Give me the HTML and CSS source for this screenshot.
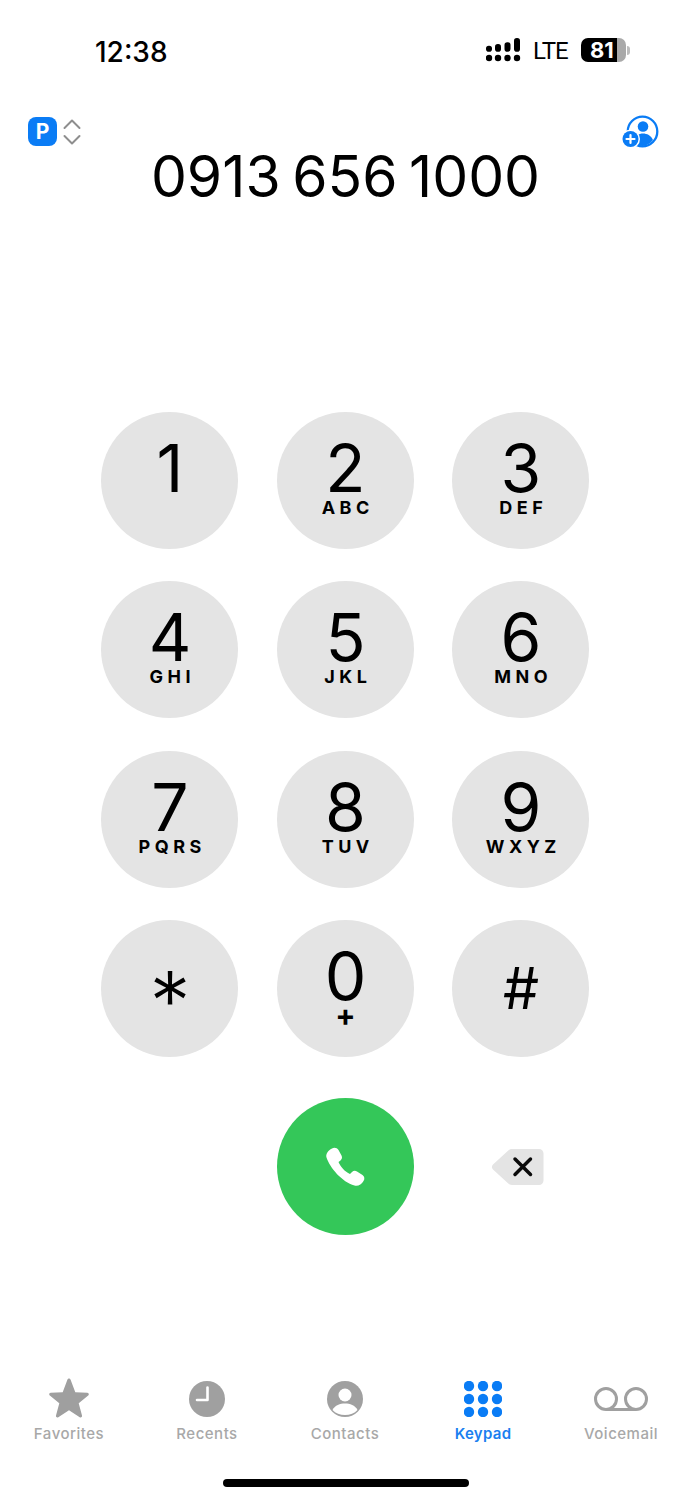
FILE: index.html
```html
<!DOCTYPE html>
<html lang="en">
<head>
<meta charset="utf-8">
<title>Keypad</title>
<link rel="stylesheet" href="styles.css">
</head>
<body>
<main class="phone">
  <header class="status">
    <span class="time">12:38</span>
    <div class="status-right">
      <svg class="signal" viewBox="0 0 35 24" aria-hidden="true">
        <g fill="#000">
          <circle cx="3" cy="20" r="3.200"/><circle cx="12" cy="20" r="3.200"/><circle cx="21.500" cy="20" r="3.200"/><circle cx="31" cy="20" r="3.200"/>
          <rect x="0" y="7.700" width="6" height="6" rx="2.800"/>
          <rect x="9" y="6" width="6" height="7.700" rx="2.800"/>
          <rect x="18.500" y="4.300" width="6" height="9.400" rx="2.800"/>
          <rect x="28" y="0" width="6" height="13.700" rx="2.800"/>
        </g>
      </svg>
      <span class="lte">LTE</span>
      <div class="battery"><span class="battery-level">81</span><span class="battery-nub"></span></div>
    </div>
  </header>

  <section class="topbar">
    <div class="line-picker">
      <span class="line-badge">P</span>
      <svg class="chevrons" viewBox="0 0 18 26" aria-hidden="true">
        <path d="M1.500 9 9 1.500 16.500 9M1.500 17 9 24.500 16.500 17" fill="none" stroke="#8e8e8e" stroke-width="2" stroke-linecap="round" stroke-linejoin="round"/>
      </svg>
    </div>
    <svg class="add-contact" viewBox="0 0 37 33" aria-hidden="true">
      <circle cx="20.500" cy="16.500" r="14.800" fill="none" stroke="#0a7cf5" stroke-width="2.300"/>
      <circle cx="21" cy="11.500" r="5.300" fill="#0a7cf5"/>
      <path d="M11 26c1.500-5.500 6-7.500 10-7.500s8 2 10 6.500c-2.800 3.500-6.500 6-10.500 6-3.500 0-6.500-1.800-9.500-5z" fill="#0a7cf5"/>
      <circle cx="8.500" cy="24" r="9.500" fill="#fff"/>
      <circle cx="8.500" cy="24" r="8" fill="#0a7cf5"/>
      <path d="M8.500 20v8M4.500 24h8" stroke="#fff" stroke-width="2.200" stroke-linecap="round"/>
    </svg>
  </section>

  <h1 class="number">0913 656 1000</h1>

  <section class="keypad">
    <button class="key"><span class="digit">1</span><span class="letters"></span></button>
    <button class="key"><span class="digit">2</span><span class="letters">ABC</span></button>
    <button class="key"><span class="digit">3</span><span class="letters">DEF</span></button>
    <button class="key"><span class="digit">4</span><span class="letters">GHI</span></button>
    <button class="key"><span class="digit">5</span><span class="letters">JKL</span></button>
    <button class="key"><span class="digit">6</span><span class="letters">MNO</span></button>
    <button class="key"><span class="digit">7</span><span class="letters">PQRS</span></button>
    <button class="key"><span class="digit">8</span><span class="letters">TUV</span></button>
    <button class="key"><span class="digit">9</span><span class="letters">WXYZ</span></button>
    <button class="key"><span class="digit star">*</span></button>
    <button class="key"><span class="digit">0</span><span class="letters plus">+</span></button>
    <button class="key"><span class="digit hash">#</span></button>
    <span class="spacer"></span>
    <button class="call" aria-label="Call">
      <svg class="call-icon" viewBox="0 0 40 40" aria-hidden="true">
        <path d="M7 1.500C9 0 12 .5 13.500 3L16.500 8.500C17.500 10.500 17 12 15.500 13.500L13.500 15C15 19 20 25 25 27L27 25C28.500 23.500 30.500 23.500 32 24.500L37.500 28C39.500 29.500 40 32 38.500 34C36.500 37.500 33 39.500 29.500 38.500C17 35 5 21 1.500 10.500C.5 7 3 3.500 7 1.500Z" fill="#fff"/>
      </svg>
    </button>
    <button class="delete" aria-label="Delete">
      <svg class="delete-icon" viewBox="0 0 53 38" aria-hidden="true">
        <path d="M21 1H48A4.500 4.500 0 0 1 52.500 5.500V32.500A4.500 4.500 0 0 1 48 37H21C19.500 37 18 36.300 17 35.300L2 21.500C.5 20 .5 18 2 16.500L17 2.700C18 1.700 19.500 1 21 1Z" fill="#e4e4e4"/>
        <path d="M24 11 39.500 26.500M39.500 11 24 26.500" stroke="#0a0a0a" stroke-width="3.500" stroke-linecap="round"/>
      </svg>
    </button>
  </section>

  <nav class="tabs">
    <a class="tab">
      <svg class="tab-icon star-icon" viewBox="0 0 40 40" aria-hidden="true">
        <path d="M20 .5C20.800.5 21.300 1 21.700 2L26.300 14.200 38.300 14.800C39.800 15 40.300 16.500 39.200 17.500L29.700 25.300 33 37.500C33.400 39 32 40 30.700 39.200L20 32.300 9.300 39.200C8 40 6.600 39 7 37.500L10.300 25.300.8 17.500C-.3 16.500.2 15 1.700 14.800L13.700 14.200 18.300 2C18.700 1 19.200.5 20 .5Z" fill="#9f9f9f"/>
      </svg>
      <span>Favorites</span>
    </a>
    <a class="tab">
      <svg class="tab-icon" viewBox="0 0 36 36" aria-hidden="true">
        <circle cx="18" cy="18" r="18" fill="#a0a0a0"/>
        <path d="M18.500 6.500V19H8" fill="none" stroke="#fff" stroke-width="2.600" stroke-linecap="round" stroke-linejoin="round"/>
      </svg>
      <span>Recents</span>
    </a>
    <a class="tab">
      <svg class="tab-icon" viewBox="0 0 36 36" aria-hidden="true">
        <circle cx="18" cy="18" r="18" fill="#a0a0a0"/>
        <circle cx="18" cy="14" r="6.500" fill="#fff"/>
        <path d="M5.500 29C8 24 13 22.500 18 22.500S28 24 30.500 29C27.500 32.500 23 34 18 34S8.500 32.500 5.500 29Z" fill="#fff"/>
      </svg>
      <span>Contacts</span>
    </a>
    <a class="tab tab-active">
      <svg class="tab-icon keypad-icon" viewBox="0 0 38 36" aria-hidden="true">
        <g fill="#0a7cf5">
          <circle cx="5" cy="5" r="5.200"/><circle cx="19" cy="5" r="5.200"/><circle cx="33" cy="5" r="5.200"/>
          <circle cx="5" cy="18" r="5.200"/><circle cx="19" cy="18" r="5.200"/><circle cx="33" cy="18" r="5.200"/>
          <circle cx="5" cy="31" r="5.200"/><circle cx="19" cy="31" r="5.200"/><circle cx="33" cy="31" r="5.200"/>
        </g>
      </svg>
      <span>Keypad</span>
    </a>
    <a class="tab">
      <svg class="tab-icon voicemail-icon" viewBox="0 0 54 36" aria-hidden="true">
        <g fill="none" stroke="#a0a0a0" stroke-width="3">
          <circle cx="12" cy="18" r="10.500"/><circle cx="42" cy="18" r="10.500"/>
          <path d="M12 28.500H42"/>
        </g>
      </svg>
      <span>Voicemail</span>
    </a>
  </nav>

  <div class="home-bar"></div>
</main>
</body>
</html>
```
FILE: styles.css
```css
* { box-sizing: border-box; }

html, body {
  margin: 0;
  padding: 0;
  background: #fff;
}

.phone {
  width: 691px;
  height: 1500px;
  display: flex;
  flex-direction: column;
  overflow: hidden;
  font-family: Inter, "Liberation Sans", sans-serif;
  color: #000;
}

.status {
  height: 62px;
  padding: 42px 61px 0 95px;
  display: flex;
  justify-content: space-between;
  align-items: center;
  flex: none;
}

.time {
  font-size: 28px;
  font-weight: 550;
  line-height: 30px;
}

.status-right {
  display: flex;
  align-items: center;
  margin-bottom: 4px;
}

.signal {
  width: 35px;
  height: 24px;
  margin-right: 12px;
}

.lte {
  font-family: Roboto, sans-serif;
  font-size: 24px;
  line-height: 28px;
  letter-spacing: -1px;
  width: 35px;
  margin-top: 2px;
  margin-right: 13px;
}

.battery {
  display: flex;
  align-items: center;
}

.battery-level {
  width: 45px;
  height: 24px;
  border-radius: 7px;
  background: linear-gradient(to right, #000 0, #000 79%, #a9a9a9 79%);
  color: #fff;
  font-size: 22px;
  font-weight: 700;
  line-height: 24px;
  padding-left: 9px;
}

.battery-nub {
  width: 3px;
  height: 9px;
  margin-left: 1px;
  border-radius: 0 3px 3px 0;
  background: #bdbdbd;
}

.topbar {
  margin-top: 53px;
  height: 33px;
  padding: 0 32px 0 28px;
  display: flex;
  justify-content: space-between;
  align-items: center;
  flex: none;
}

.line-picker {
  display: flex;
  align-items: center;
  gap: 6px;
}

.line-badge {
  width: 29px;
  height: 29px;
  border-radius: 8px;
  background: #0a7cf5;
  color: #fff;
  font-size: 21px;
  font-weight: 700;
  line-height: 29px;
  text-align: center;
}

.chevrons {
  width: 18px;
  height: 26px;
}

.add-contact {
  width: 37px;
  height: 33px;
}

.number {
  margin: -1px 0 0;
  height: 60px;
  font-size: 57px;
  font-weight: 400;
  line-height: 60px;
  word-spacing: -4.500px;
  text-align: center;
  white-space: nowrap;
  flex: none;
}

.keypad {
  margin: 205px 0 0 101px;
  display: grid;
  grid-template-columns: repeat(3, 137px);
  grid-auto-rows: 137px;
  column-gap: 38.500px;
  row-gap: 32.300px;
  flex: none;
}

.key,
.call,
.delete {
  border: 0;
  padding: 0;
  margin: 0;
  font: inherit;
  color: inherit;
}

.key {
  width: 137px;
  height: 137px;
  border-radius: 50%;
  background: #e4e4e4;
  display: flex;
  flex-direction: column;
  align-items: center;
  padding: 26px 0 0 1px;
}

.digit {
  font-size: 66px;
  font-weight: 370;
  line-height: 60px;
  height: 60px;
}

.digit.star {
  margin-top: 26px;
  font-size: 82px;
  font-weight: 350;
}

.digit.hash {
  margin-top: 13px;
  font-size: 57px;
  font-weight: 400;
}

.letters {
  font-size: 18px;
  font-weight: 700;
  line-height: 20px;
  letter-spacing: 4.500px;
  margin-right: -4.500px;
}

.letters.plus {
  font-size: 30px;
  line-height: 18px;
  letter-spacing: 0;
  margin-right: 0;
}

.spacer {
  display: block;
}

.call {
  width: 137px;
  height: 137px;
  margin-top: 9px;
  border-radius: 50%;
  background: #34c759;
  display: flex;
  align-items: center;
  justify-content: center;
}

.call-icon {
  width: 40px;
  height: 40px;
}

.delete {
  align-self: center;
  margin-top: 19px;
  margin-left: 39px;
  width: 53px;
  height: 38px;
  background: none;
}

.delete-icon {
  display: block;
  width: 53px;
  height: 38px;
}

.tabs {
  margin-top: auto;
  display: grid;
  grid-template-columns: repeat(5, 138px);
  flex: none;
}

.tab {
  display: flex;
  flex-direction: column;
  align-items: center;
  height: 85px;
  color: #a8a8a8;
  font-size: 15px;
  font-weight: 500;
  line-height: 18px;
  letter-spacing: 0.500px;
}

.tab span {
  margin-top: 1px;
}

.tab-active {
  color: #1a7ff0;
  font-weight: 600;
  letter-spacing: 0.300px;
}

.tab-icon {
  display: block;
  width: 36px;
  height: 36px;
  margin-bottom: 7px;
  flex: none;
}

.star-icon {
  width: 40px;
  height: 40px;
  margin-top: -3px;
  margin-bottom: 6px;
}

.keypad-icon {
  width: 38px;
}

.voicemail-icon {
  width: 54px;
}

.home-bar {
  margin: 13px auto 13px;
  width: 246px;
  height: 8px;
  border-radius: 4px;
  background: #000;
  flex: none;
}
```
